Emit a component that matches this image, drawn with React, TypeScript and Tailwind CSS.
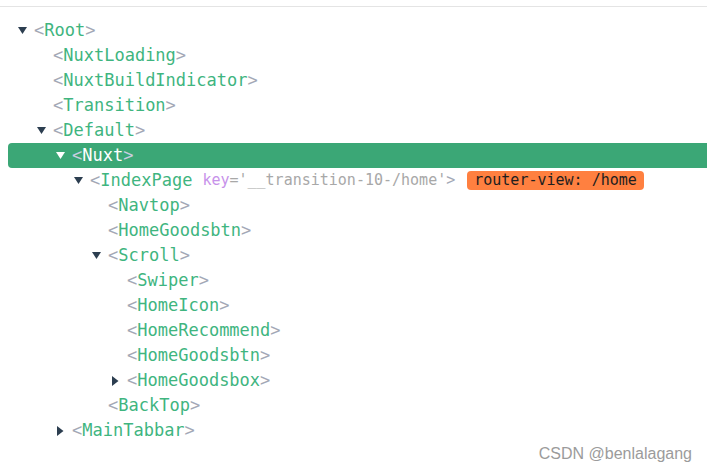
import React from "react";

type Node = {
  name: string;
  depth: number;
  arrow?: "down" | "right";
  selected?: boolean;
  attr?: { key: string; value: string };
  badge?: string;
};

// lista plana da arvore de componentes
const nodes: Node[] = [
  { name: "Root", depth: 0, arrow: "down" },
  { name: "NuxtLoading", depth: 1 },
  { name: "NuxtBuildIndicator", depth: 1 },
  { name: "Transition", depth: 1 },
  { name: "Default", depth: 1, arrow: "down" },
  { name: "Nuxt", depth: 2, arrow: "down", selected: true },
  {
    name: "IndexPage",
    depth: 3,
    arrow: "down",
    attr: { key: "key", value: "'__transition-10-/home'" },
    badge: "router-view: /home",
  },
  { name: "Navtop", depth: 4 },
  { name: "HomeGoodsbtn", depth: 4 },
  { name: "Scroll", depth: 4, arrow: "down" },
  { name: "Swiper", depth: 5 },
  { name: "HomeIcon", depth: 5 },
  { name: "HomeRecommend", depth: 5 },
  { name: "HomeGoodsbtn", depth: 5 },
  { name: "HomeGoodsbox", depth: 5, arrow: "right" },
  { name: "BackTop", depth: 4 },
  { name: "MainTabbar", depth: 2, arrow: "right" },
];

const recuo = [
  "pl-[10px]",
  "pl-[29px]",
  "pl-[48px]",
  "pl-[66px]",
  "pl-[84px]",
  "pl-[103px]",
];

const Seta: React.FC<{ tipo?: "down" | "right"; branco?: boolean }> = ({ tipo, branco }) => {
  const cor = branco ? "#ffffff" : "#2c3e50";
  return (
    <span className="w-[16px] h-[25px] flex items-center shrink-0">
      {tipo === "down" && (
        <svg width="9" height="7" viewBox="0 0 9 7">
          <polygon points="0,0 9,0 4.5,7" fill={cor} />
        </svg>
      )}
      {tipo === "right" && (
        <svg width="9" height="10" viewBox="0 0 9 10" className="mt-[1px]">
          <polygon points="1,0 7.5,5 1,10" fill={cor} />
        </svg>
      )}
    </span>
  );
};

const App: React.FC = () => {
  return (
    <div className="relative w-[707px] h-[473px] bg-white overflow-hidden font-['DejaVu_Sans_Mono',monospace]">
      <div className="h-[6px]"></div>
      <div className="border-t border-[#e4e4e4]"></div>
      <div className="pt-[11px] flex flex-col">
        {nodes.map((n, i) => (
          <div
            key={i}
            className={`ml-2 h-[25px] flex items-center whitespace-nowrap ${recuo[n.depth]} ${
              n.selected ? "bg-[#3ba776] rounded-l-[4px]" : ""
            }`}
          >
            <Seta tipo={n.arrow} branco={n.selected} />
            <span className={`text-[17px] leading-[25px] ${n.selected ? "text-[#c9cde0]" : "text-[#a3a8b6]"}`}>&lt;</span>
            <span className={`text-[17px] leading-[25px] ${n.selected ? "text-white" : "text-[#3fb57f]"}`}>{n.name}</span>
            {n.attr && (
              <span className="text-[15px] leading-[25px] ml-[10px]">
                <span className="text-[#c792ea]">{n.attr.key}</span>
                <span className="text-[#a8a8a8]">={n.attr.value}</span>
              </span>
            )}
            <span
              className={`${n.attr ? "text-[15px]" : "text-[17px]"} leading-[25px] ${
                n.selected ? "text-[#c9cde0]" : "text-[#a3a8b6]"
              }`}
            >
              &gt;
            </span>
            {n.badge && (
              <span className="ml-[12px] h-[19px] px-[7px] rounded-[4px] bg-[#ff8040] text-[#1e1e1e] text-[15px] leading-[19px] flex items-center">
                {n.badge}
              </span>
            )}
          </div>
        ))}
      </div>
      <div className="absolute right-[15px] bottom-[7px] text-[16px] text-[#9b9b9b] font-['Liberation_Sans',Arial,sans-serif]">
        CSDN @benlalagang
      </div>
    </div>
  );
};

export default App;
